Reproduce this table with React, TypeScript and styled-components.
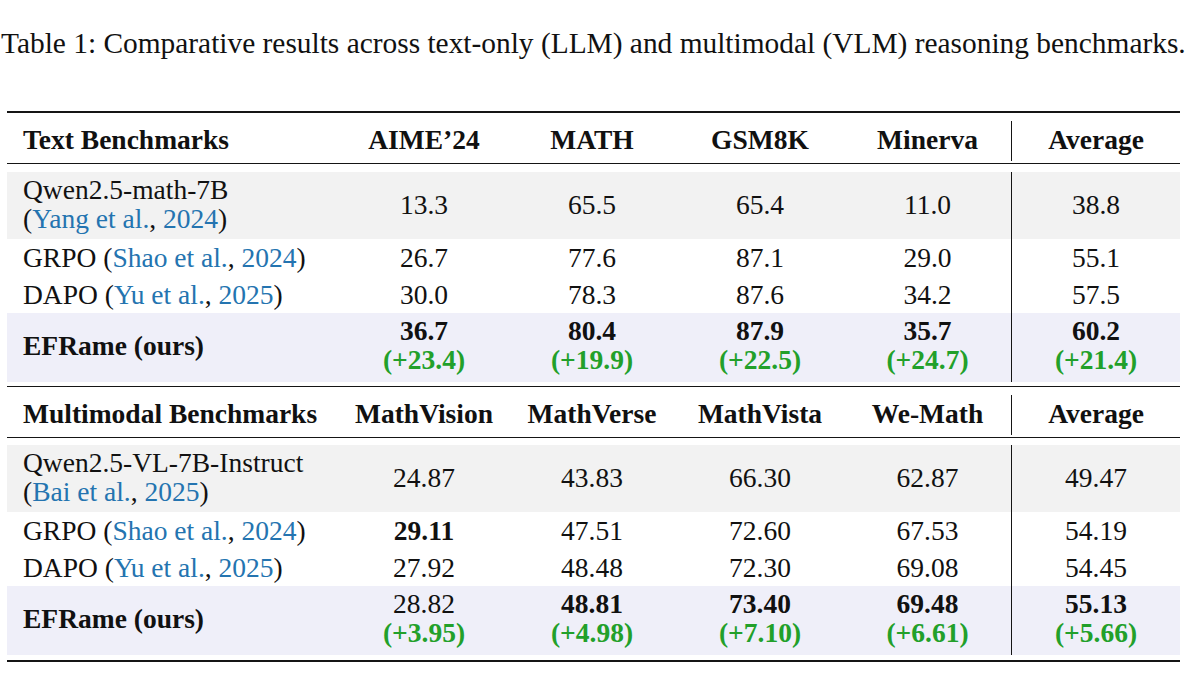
import { FC, ReactNode } from 'react';
import styled, { createGlobalStyle } from 'styled-components';

const GlobalStyle = createGlobalStyle`
  html, body {
    margin: 0;
    padding: 0;
    background: #ffffff;
  }
  body {
    font-family: 'Liberation Serif', 'Times New Roman', serif;
    color: #111111;
  }
`;

type Tone = 'plain' | 'gray' | 'ours';

const toneColors: Record<Tone, string> = {
  plain: 'transparent',
  gray: '#f2f2f2',
  ours: '#efeff9',
};

const Page = styled.div`
  width: 1187px;
  height: 690px;
  overflow: hidden;
  display: flex;
  flex-direction: column;
`;

const Caption = styled.p`
  margin: 26px 0 0 1px;
  font-size: 29.4px;
  line-height: 35px;
  white-space: nowrap;
  color: #111;
`;

const Table = styled.div`
  margin: 50px 0 0 7px;
  width: 1173px;
  display: flex;
  flex-direction: column;
`;

const SectionBlock = styled.div`
  display: flex;
  flex-direction: column;
`;

const Rule = styled.div<{ $thick?: boolean }>`
  height: ${({ $thick }) => ($thick ? 2 : 1)}px;
  background: #151515;
`;

const Gap = styled.div<{ $h: number }>`
  height: ${({ $h }) => $h}px;
`;

const Row = styled.div<{ $h: number; $tone: Tone }>`
  display: grid;
  grid-template-columns: 333px 168px 168px 168px 167px 169px;
  height: ${({ $h }) => $h}px;
  background: ${({ $tone }) => toneColors[$tone]};
  font-size: 27.5px;
`;

const NameCell = styled.div<{ $twoLines?: boolean; $lift: number }>`
  display: flex;
  align-items: center;
  padding-left: 16px;
  padding-bottom: ${({ $lift }) => $lift}px;
  line-height: ${({ $twoLines }) => ($twoLines ? 29 : 37)}px;
  white-space: nowrap;

  b {
    font-weight: 700;
  }
`;

const Label = styled.span`
  display: block;
`;

const Cell = styled.div<{ $divider?: boolean }>`
  display: flex;
  align-items: center;
  justify-content: center;
  text-align: center;
  line-height: 37px;
  border-left: ${({ $divider }) => ($divider ? '1px solid #151515' : 'none')};

  b {
    font-weight: 700;
  }
`;

const Stack = styled.div<{ $ours?: boolean }>`
  display: flex;
  flex-direction: column;
  align-items: center;
  line-height: ${({ $ours }) => ($ours ? 29 : 37)}px;
  padding-bottom: ${({ $ours }) => ($ours ? 6 : 3)}px;
`;

const Value = styled.span<{ $bold?: boolean }>`
  font-weight: ${({ $bold }) => ($bold ? 700 : 400)};
`;

const Gain = styled.span`
  font-weight: 700;
  color: #22a02a;
`;

const Cite = styled.span`
  color: #2474b0;
`;

interface Entry {
  value: string;
  bold?: boolean;
  gain?: string;
}

interface BodyRow {
  tone: Tone;
  name: ReactNode;
  entries: Entry[];
}

interface Section {
  title: string;
  columns: string[];
  rows: BodyRow[];
}

const cite = (who: string, year: string) => (
  <>
    (<Cite>{who}</Cite>, <Cite>{year}</Cite>)
  </>
);

const sections: Section[] = [
  {
    title: 'Text Benchmarks',
    columns: ['AIME’24', 'MATH', 'GSM8K', 'Minerva', 'Average'],
    rows: [
      {
        tone: 'gray',
        name: (
          <>
            Qwen2.5-math-7B
            <br />
            {cite('Yang et al.', '2024')}
          </>
        ),
        entries: [{ value: '13.3' }, { value: '65.5' }, { value: '65.4' }, { value: '11.0' }, { value: '38.8' }],
      },
      {
        tone: 'plain',
        name: <>GRPO {cite('Shao et al.', '2024')}</>,
        entries: [{ value: '26.7' }, { value: '77.6' }, { value: '87.1' }, { value: '29.0' }, { value: '55.1' }],
      },
      {
        tone: 'plain',
        name: <>DAPO {cite('Yu et al.', '2025')}</>,
        entries: [{ value: '30.0' }, { value: '78.3' }, { value: '87.6' }, { value: '34.2' }, { value: '57.5' }],
      },
      {
        tone: 'ours',
        name: <b>EFRame (ours)</b>,
        entries: [
          { value: '36.7', bold: true, gain: '(+23.4)' },
          { value: '80.4', bold: true, gain: '(+19.9)' },
          { value: '87.9', bold: true, gain: '(+22.5)' },
          { value: '35.7', bold: true, gain: '(+24.7)' },
          { value: '60.2', bold: true, gain: '(+21.4)' },
        ],
      },
    ],
  },
  {
    title: 'Multimodal Benchmarks',
    columns: ['MathVision', 'MathVerse', 'MathVista', 'We-Math', 'Average'],
    rows: [
      {
        tone: 'gray',
        name: (
          <>
            Qwen2.5-VL-7B-Instruct
            <br />
            {cite('Bai et al.', '2025')}
          </>
        ),
        entries: [{ value: '24.87' }, { value: '43.83' }, { value: '66.30' }, { value: '62.87' }, { value: '49.47' }],
      },
      {
        tone: 'plain',
        name: <>GRPO {cite('Shao et al.', '2024')}</>,
        entries: [
          { value: '29.11', bold: true },
          { value: '47.51' },
          { value: '72.60' },
          { value: '67.53' },
          { value: '54.19' },
        ],
      },
      {
        tone: 'plain',
        name: <>DAPO {cite('Yu et al.', '2025')}</>,
        entries: [{ value: '27.92' }, { value: '48.48' }, { value: '72.30' }, { value: '69.08' }, { value: '54.45' }],
      },
      {
        tone: 'ours',
        name: <b>EFRame (ours)</b>,
        entries: [
          { value: '28.82', gain: '(+3.95)' },
          { value: '48.81', bold: true, gain: '(+4.98)' },
          { value: '73.40', bold: true, gain: '(+7.10)' },
          { value: '69.48', bold: true, gain: '(+6.61)' },
          { value: '55.13', bold: true, gain: '(+5.66)' },
        ],
      },
    ],
  },
];

const rowHeight = (tone: Tone) => {
  if (tone === 'ours') return 69;
  return tone === 'gray' ? 67 : 37;
};

const App: FC = () => {
  return (
    <Page>
      <GlobalStyle />
      <Caption>
        Table 1: Comparative results across text-only (LLM) and multimodal (VLM) reasoning benchmarks.
      </Caption>
      <Table>
        <Rule $thick />
        {sections.map((section, si) => (
          <SectionBlock key={section.title}>
            <Gap $h={8} />
            <Row $h={37} $tone="plain">
              <NameCell $lift={3}>
                <b>{section.title}</b>
              </NameCell>
              {section.columns.map((col, ci) => (
                <Cell key={col} $divider={ci === 4}>
                  <Stack>
                    <b>{col}</b>
                  </Stack>
                </Cell>
              ))}
            </Row>
            <Gap $h={5} />
            <Rule />
            <Gap $h={si === 0 ? 8 : 7} />
            {section.rows.map((row, ri) => (
              <Row key={ri} $h={rowHeight(row.tone)} $tone={row.tone}>
                <NameCell $twoLines={row.tone === 'gray'} $lift={row.tone === 'ours' ? 4 : 3}>
                  <Label>{row.name}</Label>
                </NameCell>
                {row.entries.map((entry, ei) => (
                  <Cell key={ei} $divider={ei === 4}>
                    <Stack $ours={row.tone === 'ours'}>
                      <Value $bold={entry.bold}>{entry.value}</Value>
                      {entry.gain && <Gain>{entry.gain}</Gain>}
                    </Stack>
                  </Cell>
                ))}
              </Row>
            ))}
            <Gap $h={si === 0 ? 4 : 5} />
            <Rule $thick={si === sections.length - 1} />
          </SectionBlock>
        ))}
      </Table>
    </Page>
  );
};

export default App;
